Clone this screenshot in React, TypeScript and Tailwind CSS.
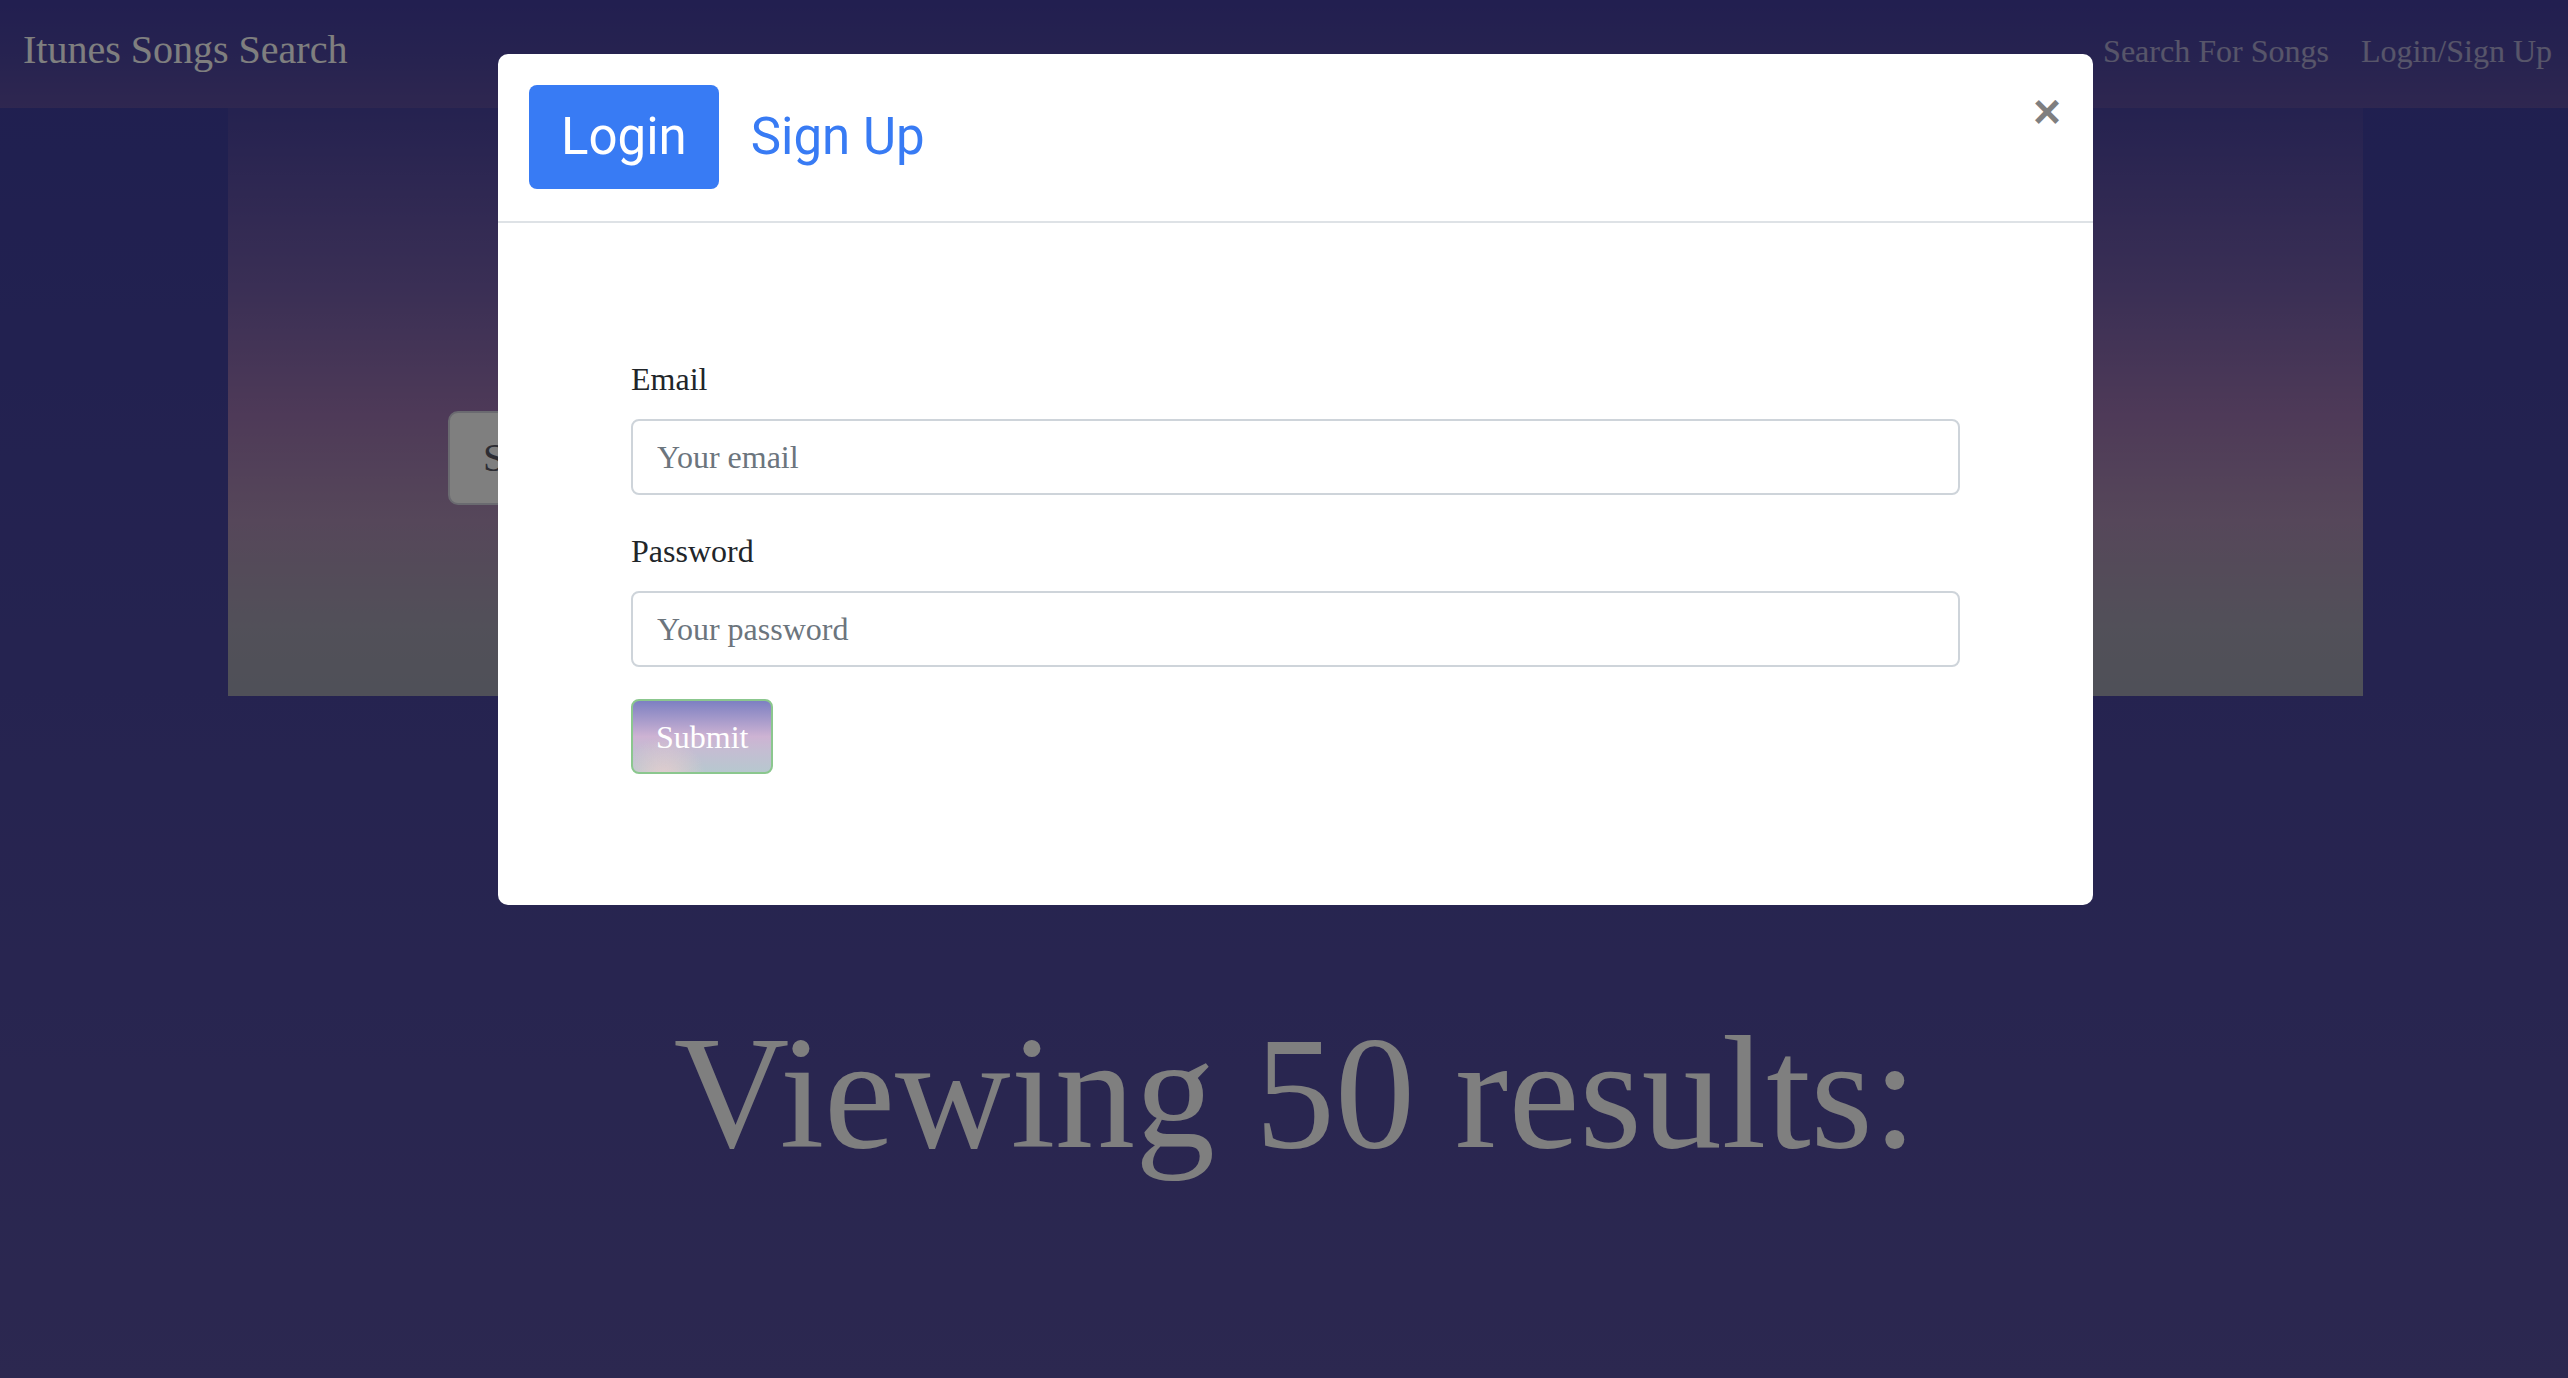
import { useState } from "react";

function Navbar() {
  return (
    <nav className="flex h-[108px] items-start justify-between bg-[linear-gradient(to_bottom,#443ea0,#4e46a0_55%,#5e4ea0)] pl-[23px]">
      <a href="#" className="mt-[20px] text-[40px] leading-[60px] text-white">
        Itunes Songs Search
      </a>
      <ul className="mt-[27px] flex text-[32px] leading-[48px] text-white/55">
        <li className="px-4">Search For Songs</li>
        <li className="px-4">Login/Sign Up</li>
      </ul>
    </nav>
  );
}

function Hero() {
  return (
    <section className="mx-auto h-[588px] w-[2135px] bg-[linear-gradient(to_bottom,#4a44a0_0%,#745eaa_30%,#9c74b0_52%,#ac8eb4_70%,#a4a0b2_88%,#9ea0b0_100%)] pl-[220px] pt-[303px]">
      <div className="flex h-[94px] w-[1450px] items-center rounded-[10px] border-2 border-[#d4d4e0] bg-[#fefefe] pl-[33px] text-[40px] text-[#5a5a66]">
        Search for a song...
      </div>
    </section>
  );
}

function LoginModal() {
  const [tab, setTab] = useState<"login" | "signup">("login");

  return (
    <div className="mt-[54px] h-fit w-[1595px] rounded-[10px] bg-white">
      <div className="flex items-start justify-between border-b-2 border-[#dee2e6] px-[31px] pb-[32px] pt-[31px]">
        <div className="flex font-['Roboto',sans-serif] text-[51px] leading-[58px]">
          <button
            onClick={() => setTab("login")}
            className={
              tab === "login"
                ? "rounded-[8px] bg-[#387bf4] px-[32px] py-[23px] text-white"
                : "px-[32px] py-[23px] text-[#387bf4]"
            }
          >
            Login
          </button>
          <button
            onClick={() => setTab("signup")}
            className={
              tab === "signup"
                ? "rounded-[8px] bg-[#387bf4] px-[32px] py-[23px] text-white"
                : "px-[32px] py-[23px] text-[#387bf4]"
            }
          >
            Sign Up
          </button>
        </div>
        <button className="mr-[1px] mt-[3px] font-['Liberation_Sans',sans-serif] text-[48px] font-bold leading-[48px] text-black/50">
          ×
        </button>
      </div>

      <form className="px-[133px] pb-[131px] pt-[132px] text-[32px] leading-[48px] text-[#212529]">
        <label className="mb-4 block">Email</label>
        <input
          type="email"
          placeholder="Your email"
          className="mb-8 block h-[76px] w-full rounded-[8px] border-2 border-[#ced4da] px-[24px] placeholder:text-[#6c757d]"
        />
        <label className="mb-4 block">Password</label>
        <input
          type="password"
          placeholder="Your password"
          className="mb-8 block h-[76px] w-full rounded-[8px] border-2 border-[#ced4da] px-[24px] placeholder:text-[#6c757d]"
        />
        <button
          type="button"
          className="h-[75px] rounded-[8px] border-2 border-[#8bc78e] bg-[radial-gradient(circle_at_22%_112%,rgba(236,206,206,0.9)_0,rgba(236,206,206,0)_32%),linear-gradient(to_bottom,#7d80c2_0%,#a99ccb_28%,#cdb3d3_50%,#c3bed2_72%,#b7c8cf_100%)] px-[23px] text-white"
        >
          Submit
        </button>
      </form>
    </div>
  );
}

export default function App() {
  return (
    <div className="relative min-h-screen bg-[linear-gradient(to_bottom,#3e3ea0,#5850a0)] font-['Liberation_Serif',serif]">
      <Navbar />
      <main className="pl-[23px]">
        <Hero />
        <h1 className="mt-[301px] text-center text-[160px] leading-[192px] text-white">
          Viewing 50 results:
        </h1>
      </main>

      {/* modal backdrop */}
      <div className="fixed inset-0 bg-black/50" />
      <div className="fixed inset-0 flex justify-center pl-[23px]">
        <LoginModal />
      </div>
    </div>
  );
}
